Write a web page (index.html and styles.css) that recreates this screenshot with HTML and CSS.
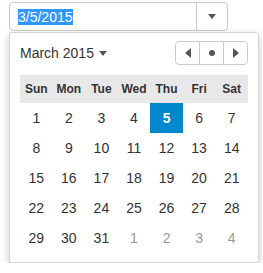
FILE: index.html
```html
<!DOCTYPE html>
<html>
<head>
<meta charset="utf-8">
<link rel="stylesheet" href="styles.css">
</head>
<body>
<div class="picker">
  <div class="input">
    <div class="value"><span class="sel">3/5/2015</span></div>
    <div class="toggle"><span class="caret"></span></div>
  </div>
  <div class="popup">
    <div class="head">
      <div class="title">March 2015<span class="caret small"></span></div>
      <div class="nav">
        <div class="btn"><span class="tri-left"></span></div>
        <div class="btn"><span class="dot"></span></div>
        <div class="btn"><span class="tri-right"></span></div>
      </div>
    </div>
    <table class="cal">
      <thead>
        <tr><th>Sun</th><th>Mon</th><th>Tue</th><th>Wed</th><th>Thu</th><th>Fri</th><th>Sat</th></tr>
      </thead>
      <tbody>
        <tr><td>1</td><td>2</td><td>3</td><td>4</td><td class="active">5</td><td>6</td><td>7</td></tr>
        <tr><td>8</td><td>9</td><td>10</td><td>11</td><td>12</td><td>13</td><td>14</td></tr>
        <tr><td>15</td><td>16</td><td>17</td><td>18</td><td>19</td><td>20</td><td>21</td></tr>
        <tr><td>22</td><td>23</td><td>24</td><td>25</td><td>26</td><td>27</td><td>28</td></tr>
        <tr><td>29</td><td>30</td><td>31</td><td class="other">1</td><td class="other">2</td><td class="other">3</td><td class="other">4</td></tr>
      </tbody>
    </table>
  </div>
</div>
</body>
</html>
```
FILE: styles.css
```css
html, body {
  margin: 0;
  padding: 0;
  background: #fff;
}
body {
  font-family: "Liberation Sans", Arial, sans-serif;
  color: #333;
  font-size: 14px;
}
.picker {
  padding: 2px 0 0 9px;
}
.input {
  width: 219px;
  height: 29px;
  box-sizing: border-box;
  border: 1px solid #ccc;
  border-radius: 4px;
  display: flex;
}
.value {
  flex: 1;
  display: flex;
  align-items: center;
  padding-left: 8px;
  line-height: 16px;
}
.sel {
  background: #3297fd;
  color: #fff;
}
.toggle {
  width: 30px;
  border-left: 1px solid #ccc;
  display: flex;
  align-items: center;
  justify-content: center;
}
.caret {
  display: inline-block;
  width: 0;
  height: 0;
  border-top: 5px solid #555;
  border-left: 4px solid transparent;
  border-right: 4px solid transparent;
}
.caret.small {
  margin-left: 5px;
  vertical-align: 2px;
}
.popup {
  margin-top: 1px;
  width: 250px;
  box-sizing: border-box;
  border: 1px solid #d4d4d4;
  border-radius: 3px;
  padding: 8px 10px 9px;
  background: #fff;
  box-shadow: 0 3px 8px rgba(0,0,0,0.22);
}
.head {
  height: 24px;
  display: flex;
  align-items: center;
  justify-content: space-between;
  margin-bottom: 10px;
}
.title {
  font-size: 14px;
  color: #333;
}
.nav {
  display: flex;
  border: 1px solid #ccc;
  border-radius: 4px;
  height: 24px;
  box-sizing: border-box;
}
.btn {
  width: 23px;
  display: flex;
  align-items: center;
  justify-content: center;
}
.btn + .btn {
  border-left: 1px solid #ccc;
}
.tri-left {
  width: 0; height: 0;
  border-right: 6px solid #555;
  border-top: 5px solid transparent;
  border-bottom: 5px solid transparent;
}
.tri-right {
  width: 0; height: 0;
  border-left: 6px solid #555;
  border-top: 5px solid transparent;
  border-bottom: 5px solid transparent;
}
.dot {
  width: 6px; height: 6px;
  border-radius: 50%;
  background: #555;
}
.cal {
  width: 228px;
  border-collapse: collapse;
  table-layout: fixed;
}
.cal th {
  background: #e8e8e8;
  height: 28px;
  padding: 0;
  font-size: 12px;
  font-weight: bold;
  color: #333;
  text-align: center;
}
.cal td {
  height: 30px;
  padding: 0;
  text-align: center;
  font-size: 14px;
  color: #333;
}
.cal td.active {
  background: #0088cc;
  color: #fff;
  font-weight: bold;
}
.cal td.other {
  color: #999;
}
```
